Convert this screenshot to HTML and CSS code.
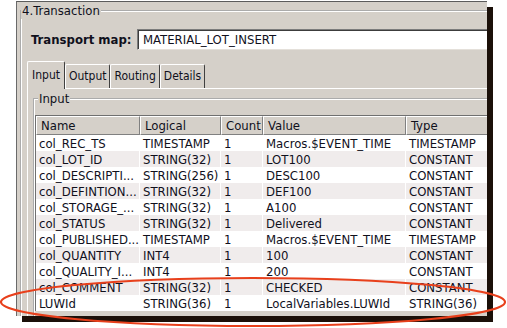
FILE: index.html
```html
<!DOCTYPE html>
<html lang="en">
<head>
    <meta charset="UTF-8">
    <title>4.Transaction</title>
    <link rel="stylesheet" href="styles.css">
</head>
<body>
    <div class="screen">
        <div class="window">
            <fieldset class="group outer">
                <legend>4.Transaction</legend>
                <div class="map-row">
                    <label class="map-label" for="map">Transport map:</label>
                    <input class="map-input" id="map" type="text" value="MATERIAL_LOT_INSERT">
                </div>
                <div class="tabs">
                    <span class="tab active">Input</span>
                    <span class="tab">Output</span>
                    <span class="tab">Routing</span>
                    <span class="tab">Details</span>
                </div>
                <div class="tab-panel">
                    <fieldset class="group inner">
                        <legend>Input</legend>
                        <table class="grid">
                            <colgroup>
                                <col class="c-name">
                                <col class="c-logical">
                                <col class="c-count">
                                <col class="c-value">
                                <col class="c-type">
                            </colgroup>
                            <thead>
                                <tr>
                                    <th>Name</th>
                                    <th>Logical</th>
                                    <th>Count</th>
                                    <th>Value</th>
                                    <th>Type</th>
                                </tr>
                            </thead>
                            <tbody>
                                <tr><td>col_REC_TS</td><td>TIMESTAMP</td><td>1</td><td>Macros.$EVENT_TIME</td><td>TIMESTAMP</td></tr>
                                <tr><td>col_LOT_ID</td><td>STRING(32)</td><td>1</td><td>LOT100</td><td>CONSTANT</td></tr>
                                <tr><td>col_DESCRIPTI...</td><td>STRING(256)</td><td>1</td><td>DESC100</td><td>CONSTANT</td></tr>
                                <tr><td>col_DEFINTION...</td><td>STRING(32)</td><td>1</td><td>DEF100</td><td>CONSTANT</td></tr>
                                <tr><td>col_STORAGE_...</td><td>STRING(32)</td><td>1</td><td>A100</td><td>CONSTANT</td></tr>
                                <tr><td>col_STATUS</td><td>STRING(32)</td><td>1</td><td>Delivered</td><td>CONSTANT</td></tr>
                                <tr><td>col_PUBLISHED...</td><td>TIMESTAMP</td><td>1</td><td>Macros.$EVENT_TIME</td><td>TIMESTAMP</td></tr>
                                <tr><td>col_QUANTITY</td><td>INT4</td><td>1</td><td>100</td><td>CONSTANT</td></tr>
                                <tr><td>col_QUALITY_I...</td><td>INT4</td><td>1</td><td>200</td><td>CONSTANT</td></tr>
                                <tr><td>col_COMMENT</td><td>STRING(32)</td><td>1</td><td>CHECKED</td><td>CONSTANT</td></tr>
                                <tr><td>LUWId</td><td>STRING(36)</td><td>1</td><td>LocalVariables.LUWId</td><td>STRING(36)</td></tr>
                            </tbody>
                        </table>
                    </fieldset>
                </div>
            </fieldset>
        </div>
        <!-- red marker drawn over the screenshot -->
        <svg class="mark" width="507" height="328" viewBox="0 0 507 328">
            <ellipse cx="253" cy="302" rx="252" ry="24" fill="none" stroke="#e8401c" stroke-width="2.2"/>
        </svg>
    </div>
</body>
</html>
```

FILE: styles.css
```css
html, body {
    margin: 0;
    padding: 0;
    background: #fff;
}
body {
    font-family: "DejaVu Sans Condensed", "DejaVu Sans", sans-serif;
    font-stretch: condensed;
    font-size: 13px;
    color: #10101c;
}
.screen {
    position: relative;
    width: 507px;
    height: 328px;
    overflow: hidden;
}
.window {
    margin: 1px 0 0 16px;
    width: 470px;
    height: 314px;
    border-top: 1px solid #5c5c5c;
    border-left: 1px solid #6a6a6a;
    background: #d5d0c9;
    box-shadow: 6px 6px 0 #1b1009;
    overflow: hidden;
}
.group {
    margin: 0;
    padding: 0;
    border: 2px groove #fff;
    min-width: 0;
}
.group legend {
    padding: 0 1px;
    margin-left: -1px;
    line-height: 16px;
}
.outer {
    margin: 1px 0 0 3px;
    width: 520px;
    height: 340px;
    padding: 10px 0 0 0;
}
.map-row {
    display: flex;
    align-items: center;
    padding-left: 9px;
}
.map-label {
    font-weight: bold;
    width: 106px;
}
.map-input {
    font: inherit;
    color: inherit;
    width: 400px;
    height: 21px;
    box-sizing: border-box;
    margin: 0;
    padding: 0 5px;
    border: 1px solid;
    border-color: #7c7c7c #e4e0da #e4e0da #7c7c7c;
    box-shadow: inset 1px 1px 0 #3c3c3c;
    background: #fff;
    outline: none;
}
.tabs {
    display: flex;
    align-items: flex-end;
    margin: 11px 0 0 5px;
    height: 27px;
    font-size: 12px;
}
.tab {
    height: 23px;
    padding: 0 3px;
    line-height: 23px;
    border: 1px solid;
    border-color: #fff #404040 transparent #fff;
    border-bottom: none;
    border-radius: 2px 2px 0 0;
}
.tab.active {
    height: 27px;
    line-height: 27px;
    padding: 0 4px;
    margin-bottom: -1px;
    position: relative;
    z-index: 1;
    background: #d5d0c9;
}
.tab-panel {
    margin-left: 5px;
    border-top: 1px solid #fff;
    border-left: 1px solid #fff;
    padding: 2px 0 0 5px;
}
.inner {
    padding-top: 8px;
    height: 260px;
}
.inner legend {
    margin-left: 3px;
}
.grid {
    table-layout: fixed;
    border-collapse: separate;
    border-spacing: 0;
    width: 480px;
    border-top: 1px solid #707070;
    border-left: 1px solid #707070;
    background: #fff;
}
.c-name { width: 104px; }
.c-logical { width: 81px; }
.c-count { width: 42px; }
.c-value { width: 143px; }
.c-type { width: 110px; }
.grid th {
    font-weight: normal;
    text-align: left;
    line-height: 17px;
    padding: 0 4px;
    background: #d5d0c9;
    border-top: 1px solid #fff;
    border-left: 1px solid #fff;
    border-right: 1px solid #808080;
    border-bottom: 1px solid #808080;
    white-space: nowrap;
    overflow: hidden;
}
.grid td {
    line-height: 15px;
    padding: 1px 3px 0;
    white-space: nowrap;
    overflow: hidden;
    border-right: 1px solid #fff;
}
.grid tbody tr:nth-child(even) td {
    background: #f0ecec;
}
.mark {
    position: absolute;
    left: 0;
    top: 0;
}
```
